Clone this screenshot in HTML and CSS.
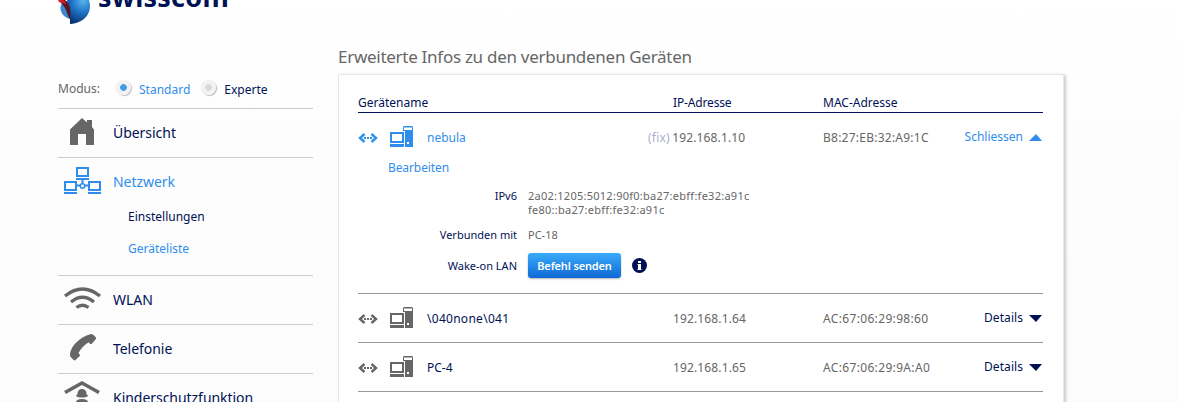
FILE: index.html
```
<!DOCTYPE html>
<html lang="de">
<head>
<meta charset="utf-8">
<title>Swisscom – Geräteliste</title>
<link rel="stylesheet" href="styles.css">
</head>
<body>
<svg class="sprite" aria-hidden="true">
  <symbol id="link" viewBox="0 0 20 10">
    <path d="M6.500 1 2 5l4.500 4M13.500 1 18 5l-4.500 4" fill="none" stroke="currentColor" stroke-width="2.400"/>
    <path d="M6 4h2v2H6zM9 4h2v2H9zM12 4h2v2h-2z" fill="currentColor"/>
  </symbol>
  <symbol id="pc" viewBox="0 0 23 21">
    <path d="M1 7h12v9H1z" fill="none" stroke="currentColor" stroke-width="2"/>
    <path d="M0 18h14v3H0z" fill="currentColor"/>
    <path fill-rule="evenodd" d="M13 1l1-1h8l1 1v20h-8V5h-2zM14 1.500V4h8V1.500zM17 16v2h2v-2z" fill="currentColor"/>
  </symbol>
</svg>
<div class="page">
  <header class="header">
    <svg class="logo" width="36" height="26" viewBox="0 0 36 26">
      <defs>
        <radialGradient id="globe" gradientUnits="userSpaceOnUse" cx="25" cy="1" r="24"><stop offset="0" stop-color="#58b4ec"/><stop offset=".5" stop-color="#1c6fc4"/><stop offset="1" stop-color="#08306f"/></radialGradient>
      </defs>
      <path d="M4 3C0 9 4 17 12 19V0z" fill="#3a8ad2"/>
      <path d="M9 0h22c4 12-4 23-19 24V12z" fill="url(#globe)"/>
      <path d="M2 0h5c5 4 6 9 5 19C9 16 10 9 2 2z" fill="#5e1420"/>
      <path d="M0 0h5c2 1 3 2 3 4C6 3 3 3 1 2z" fill="#d81e2c"/>
    </svg>
    <span class="brand">swisscom</span>
  </header>
  <div class="main">
    <nav class="sidebar">
      <div class="mode">
        <span class="mode-label">Modus:</span>
        <i class="radio radio-on"></i><a class="mode-option active">Standard</a>
        <i class="radio"></i><a class="mode-option">Experte</a>
      </div>
      <div class="item">
        <svg class="icon" width="50" height="48" viewBox="0 0 50 48"><path d="M12 20.500 24 9l5 4.500V11h5v7l2 2.500V36H28V25h-8v11h-8z" fill="currentColor"/></svg>
        <a class="item-label">Übersicht</a>
      </div>
      <div class="item item-open active">
        <svg class="icon" width="50" height="48" viewBox="0 0 50 48"><g fill="none" stroke="currentColor" stroke-width="2"><path d="M19 10h11v8H19zM7 24h11v8H7zM31 24h11v8H31z"/><path d="M18 21h13M6 35h13M30 35h13M24.500 21v5M17 27.500h5M27 27.500h5"/><circle cx="24.500" cy="28" r="2.200" stroke-width="1.500"/></g></svg>
        <a class="item-label">Netzwerk</a>
      </div>
      <div class="sub">
        <a class="sub-item">Einstellungen</a>
        <a class="sub-item active">Geräteliste</a>
      </div>
      <div class="item">
        <svg class="icon" width="50" height="48" viewBox="0 0 50 48"><path d="M7 20q17.500-14 35 0M13 26q11.500-9.500 23 0M18.500 31.500q6-4.500 12 0" fill="none" stroke="currentColor" stroke-width="3.300"/></svg>
        <a class="item-label">WLAN</a>
      </div>
      <div class="item">
        <svg class="icon" width="50" height="48" viewBox="0 0 50 48"><path d="M31.500 9.500c1.500-1 3-.5 4 .5l2 2c.7.800.7 1.500.2 2.200L34 18.500c-.7.700-1.500.7-2.200 0l-1.200-1.200C26 20 23 23.500 20.500 28l1 1.200c.6.700.6 1.400 0 2.100L17.500 35c-.7.600-1.200.6-1.900 0l-2.400-2.500c-1-1-1.300-2-1.100-4C13 21 22 12 31.500 9.500z" fill="currentColor"/></svg>
        <a class="item-label">Telefonie</a>
      </div>
      <div class="item">
        <svg class="icon" width="50" height="48" viewBox="0 0 50 48"><path d="M7 18.500 24 9l17 9.500" fill="none" stroke="currentColor" stroke-width="3.600"/><path d="M24 15c2.800 0 4.500 2 4.500 4.500 0 1 .5 1.500 1.500 2-.5 1.500-2.500 2-6 2s-5.500-.5-6-2c1-.5 1.500-1 1.500-2C19.500 17 21.200 15 24 15zM24 25c5 0 6 2 7 5H17c1-3 2-5 7-5z" fill="currentColor"/></svg>
        <a class="item-label">Kinderschutzfunktion</a>
      </div>
    </nav>
    <main class="content">
      <h1 class="title">Erweiterte Infos zu den verbundenen Geräten</h1>
      <section class="card">
        <div class="row head"><span>Gerätename</span><span class="ip-head">IP-Adresse</span><span class="mac-head">MAC-Adresse</span></div>
        <div class="device">
          <div class="row active">
            <span class="name"><svg width="20" height="10"><use href="#link"/></svg><svg class="pc" width="23" height="21"><use href="#pc"/></svg><span class="label">nebula</span></span>
            <span class="ip"><span class="fix">(fix)</span>192.168.1.10</span>
            <span class="mac">B8:27:EB:32:A9:1C</span>
            <a class="toggle">Schliessen<i class="arrow up"></i></a>
          </div>
          <a class="edit active">Bearbeiten</a>
          <dl class="info">
            <dt>IPv6</dt><dd class="v6">2a02:1205:5012:90f0:ba27:ebff:fe32:a91c<br>fe80::ba27:ebff:fe32:a91c</dd>
            <dt class="peer">Verbunden mit</dt><dd class="peer">PC-18</dd>
            <dt>Wake-on LAN</dt>
            <dd class="wake"><button class="button">Befehl senden</button><svg width="15" height="15" viewBox="0 0 15 15"><circle cx="7.500" cy="7.500" r="7.500" fill="#001155"/><path d="M6 3h3v2H6zM5.500 6H9v5h.5v1h-4v-1H6V7h-.5z" fill="#fff"/></svg></dd>
          </dl>
        </div>
        <div class="device">
          <div class="row">
            <span class="name"><svg width="20" height="10"><use href="#link"/></svg><svg class="pc" width="23" height="21"><use href="#pc"/></svg><span class="label wide">\040none\041</span></span>
            <span class="ip">192.168.1.64</span>
            <span class="mac mac-wide">AC:67:06:29:98:60</span>
            <a class="toggle details">Details<i class="arrow"></i></a>
          </div>
        </div>
        <div class="device">
          <div class="row">
            <span class="name"><svg width="20" height="10"><use href="#link"/></svg><svg class="pc" width="23" height="21"><use href="#pc"/></svg><span class="label">PC-4</span></span>
            <span class="ip">192.168.1.65</span>
            <span class="mac mac-wide">AC:67:06:29:9A:A0</span>
            <a class="toggle details">Details<i class="arrow"></i></a>
          </div>
        </div>
      </section>
    </main>
  </div>
</div>
</body>
</html>
```
FILE: styles.css
```
* { box-sizing: border-box; }
body {
  margin: 0;
  height: 402px;
  overflow: hidden;
  background: linear-gradient(#fff 0, #fdfdfd 150px, #fcfcfc 402px);
  color: #001155;
  font: 12px/16px "Noto Sans", sans-serif;
}
.sprite { display: none; }
.page { padding-left: 58px; height: 402px; overflow: hidden; }
.active { color: #2f8eed; }

.header { display: flex; height: 34px; overflow: hidden; }
.brand { margin: -20px 0 0 4px; font-size: 27px; line-height: 34px; font-weight: 700; letter-spacing: .25px; }

.main { display: flex; gap: 25px; }
.sidebar { width: 255px; padding-top: 46px; }
.mode { display: flex; height: 28px; line-height: 18px; }
.mode-label { width: 58px; color: #666; }
.radio {
  width: 15px; height: 15px; margin: 0 8px 0 0; border-radius: 50%;
  background: radial-gradient(circle at 50% 50%, #dadada 0 3px, #f2f2f2 3.700px);
  box-shadow: 1px 1px 1px #bbb, 0 0 1px #ddd;
}
.radio-on { background: radial-gradient(circle at 50% 50%, #479be5 0 3px, #f2f2f2 3.700px); }
.mode-option { margin-right: 11px; line-height: 19px; }
.item { display: flex; height: 49px; border-top: 1px solid #ccc; }
.icon { flex: none; color: #666; }
.item.active .icon { color: #2f8eed; }
.item-label { margin-left: 5px; font-size: 14px; line-height: 47px; letter-spacing: -.04px; }
.sub { height: 69px; padding: 2px 0 0 70px; }
.sub-item { display: block; height: 32px; line-height: 17px; }

.content { width: 726px; }
.title { margin: 10px 0 6px; height: 24px; color: #666; font-size: 17px; line-height: 25px; font-weight: 400; letter-spacing: -.28px; }
.card {
  height: 360px; padding: 19px 20px 0 19px; background: #fff;
  border: 1px solid #e7e7e7; border-width: 1px 1px 0;
  box-shadow: 2px 1px 3px rgba(0, 0, 0, .2);
}
.row { display: grid; grid-template-columns: 315px 150px 1fr auto; align-items: center; height: 48px; }
.head { height: 19px; line-height: 17px; align-items: start; border-bottom: 1px solid #001155; }
.ip-head { letter-spacing: -.15px; }
.name { display: flex; align-items: center; }
.name svg { flex: none; margin-top: 1px; color: #666; }
.active .name svg { color: #2f8eed; }
.name .pc { margin: -1px 14px 0 12px; }
.label { padding-top: 1px; }
.wide { letter-spacing: .28px; }
.ip { padding-top: 2px; color: #666; letter-spacing: .13px; }
.fix { margin-left: -25px; margin-right: 2.5px; color: #a9b0c8; letter-spacing: .2px; }
.mac { padding-top: 2px; color: #666; letter-spacing: .24px; }
.mac-wide { letter-spacing: .34px; }
.toggle { display: flex; align-items: center; margin-top: -1px; }
.arrow { margin: 2px 1px 0 6px; border: 6px solid transparent; border-width: 7px 6.500px 0; border-top-color: #001155; }
.arrow { width: 13px; border-left-width: 7px; border-right-width: 6px; }
.arrow.up { border-width: 0 6px 7px 7px; border-bottom-color: #2f8eed; }
.details { letter-spacing: .06px; }
.device { border-bottom: 1px solid #999; }
.edit { display: block; margin: -1px 0 0 30px; height: 29px; line-height: 15px; letter-spacing: -.1px; }
.info { display: grid; grid-template-columns: 159px 1fr; column-gap: 11px; margin: 0; height: 104px; font-size: 11px; line-height: 14px; align-content: start; }
.info dt { text-align: right; }
.info dd { margin: 0; color: #666; }
.v6 { letter-spacing: .26px; }
.info .peer { padding-top: 11px; }
.info dt:last-of-type { padding-top: 17px; }
.wake { display: flex; align-items: center; gap: 11px; padding-top: 11px; }
.button {
  width: 93px; height: 25px; padding: 0; border: 0; border-radius: 3px;
  background: linear-gradient(#3aabfa, #0f69d5); box-shadow: 0 1px 2px rgba(0, 0, 0, .3);
  color: #fff; font: 600 11px/24px "Noto Sans", sans-serif; letter-spacing: -.15px;
}
```
